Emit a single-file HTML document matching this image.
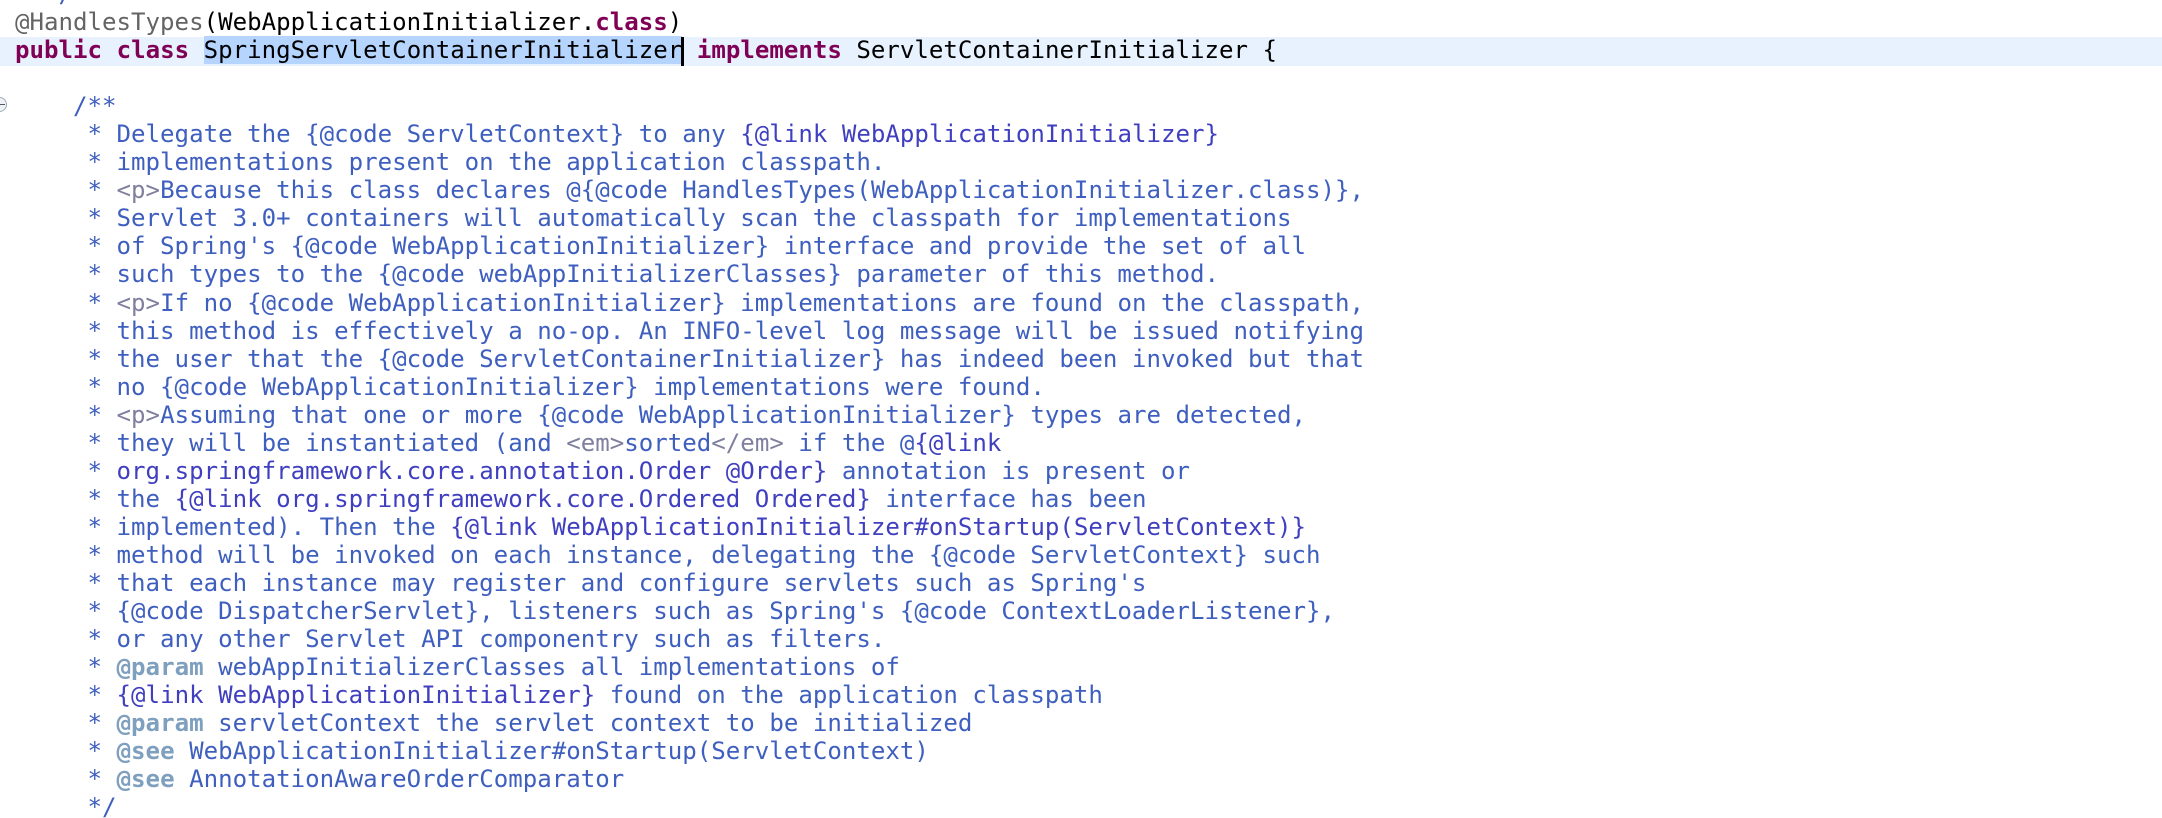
<!DOCTYPE html>
<html><head><meta charset="utf-8"><style>
html,body{margin:0;padding:0;background:#fff;width:2162px;height:818px;overflow:hidden;position:relative}
.code{position:absolute;left:15px;top:-20px;font-family:"DejaVu Sans Mono","Liberation Mono",monospace;font-size:24.1px;line-height:28.05px;white-space:pre;color:#000}
.l{height:28.05px}
.c{color:#3f5fbf}
.lk{color:#3f3fbf}
.t{color:#7f7f9f}
.p{color:#7f9fbf;font-weight:bold}
.k{color:#7f0055;font-weight:bold}
.a{color:#646464}
.band{position:absolute;left:0;top:37px;width:2162px;height:29px;background:#e8f2fe}
.sel{background:#b5d5ff}
.cur{position:absolute;left:681px;top:37px;width:3px;height:29px;background:#000}
.fold{position:absolute;left:-8px;top:97px;width:15px;height:15px;border-radius:50%;border:1.5px solid #9aa8b8;background:#eef2f6;box-sizing:border-box}
.fold:after{content:"";position:absolute;left:6px;top:5.5px;width:6px;height:1.5px;background:#556}
</style></head><body>
<div class="band"></div>
<div class="fold"></div>
<div class="code"><div class="l c">  */</div><div class="l"><span class="a">@HandlesTypes</span>(WebApplicationInitializer.<span class="k">class</span>)</div><div class="l"><span class="k">public</span> <span class="k">class</span> <span class="sel">SpringServletContainerInitializer</span> <span class="k">implements</span> ServletContainerInitializer {</div><div class="l"> </div><div class="l c">    /**</div><div class="l c">     * Delegate the {@code ServletContext} to any <span class="lk">{@link WebApplicationInitializer}</span></div><div class="l c">     * implementations present on the application classpath.</div><div class="l c">     * <span class="t">&lt;p&gt;</span>Because this class declares @{@code HandlesTypes(WebApplicationInitializer.class)},</div><div class="l c">     * Servlet 3.0+ containers will automatically scan the classpath for implementations</div><div class="l c">     * of Spring's {@code WebApplicationInitializer} interface and provide the set of all</div><div class="l c">     * such types to the {@code webAppInitializerClasses} parameter of this method.</div><div class="l c">     * <span class="t">&lt;p&gt;</span>If no {@code WebApplicationInitializer} implementations are found on the classpath,</div><div class="l c">     * this method is effectively a no-op. An INFO-level log message will be issued notifying</div><div class="l c">     * the user that the {@code ServletContainerInitializer} has indeed been invoked but that</div><div class="l c">     * no {@code WebApplicationInitializer} implementations were found.</div><div class="l c">     * <span class="t">&lt;p&gt;</span>Assuming that one or more {@code WebApplicationInitializer} types are detected,</div><div class="l c">     * they will be instantiated (and <span class="t">&lt;em&gt;</span>sorted<span class="t">&lt;/em&gt;</span> if the @<span class="lk">{@link</span></div><div class="l c">     * <span class="lk">org.springframework.core.annotation.Order @Order}</span> annotation is present or</div><div class="l c">     * the <span class="lk">{@link org.springframework.core.Ordered Ordered}</span> interface has been</div><div class="l c">     * implemented). Then the <span class="lk">{@link WebApplicationInitializer#onStartup(ServletContext)}</span></div><div class="l c">     * method will be invoked on each instance, delegating the {@code ServletContext} such</div><div class="l c">     * that each instance may register and configure servlets such as Spring's</div><div class="l c">     * {@code DispatcherServlet}, listeners such as Spring's {@code ContextLoaderListener},</div><div class="l c">     * or any other Servlet API componentry such as filters.</div><div class="l c">     * <span class="p">@param</span> webAppInitializerClasses all implementations of</div><div class="l c">     * <span class="lk">{@link WebApplicationInitializer}</span> found on the application classpath</div><div class="l c">     * <span class="p">@param</span> servletContext the servlet context to be initialized</div><div class="l c">     * <span class="p">@see</span> WebApplicationInitializer#onStartup(ServletContext)</div><div class="l c">     * <span class="p">@see</span> AnnotationAwareOrderComparator</div><div class="l c">     */</div></div>
<div class="cur"></div>
</body></html>
